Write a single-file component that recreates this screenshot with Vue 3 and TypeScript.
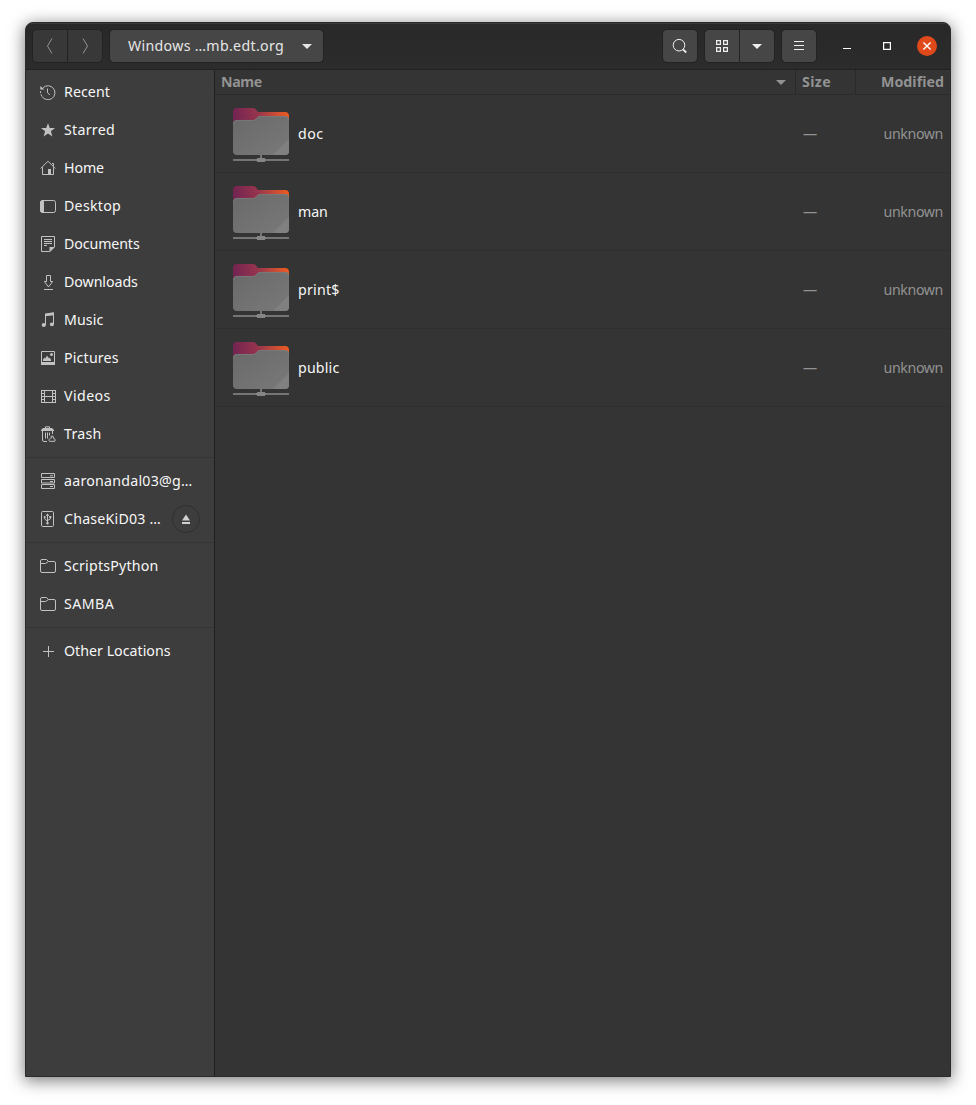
<script setup lang="ts">
import type { Directive } from 'vue'

interface Glyph { line?: string; fill?: string }
interface Place { label: string; icon: string; width: number; eject?: boolean }
interface Folder { name: string; width: number }

const glyphs: Record<string, Glyph> = {
  recent: {
    line: 'M3.2 3.6A7 7 0 1 1 1.9 12.3M.6 7.2V9.2M1 10.4L1.7 12M7.5 4.5V8.6L9.8 11',
    fill: 'M.3 2V5.5H4.5Z',
  },
  starred: { fill: 'M8 1.3L9.8 6.1H15L10.9 9.3L12.4 14.4L8 11.4L3.6 14.4L5.1 9.3L1 6.1H6.2Z' },
  home: {
    line: 'M.7 8.5L8 1.2L15.3 8.5M2.5 7.2V14.5H8M10.5 14.5H13.5V7.2M12 3.5H13.5V6',
    fill: 'M8 9H11V15H8Z',
  },
  desktop: {
    line: 'M2.5 2.5H13.5A2 2 0 0 1 15.5 4.5V12.5A2 2 0 0 1 13.5 14.5H2.5A2 2 0 0 1 .5 12.5V4.5A2 2 0 0 1 2.5 2.5Z',
    fill: 'M2 2H4V15H2L0 13V4Z',
  },
  documents: {
    line: 'M1.5 .5H14.5V11L9.8 15.5H1.5ZM4 3.5H12M4 5.5H12M4 7.5H12M4 9.5H7',
    fill: 'M9.5 11H14.8L9.5 16Z',
  },
  downloads: { line: 'M6.5 1.5H10.5V7.5H12.6L8.5 13L4.4 7.5H6.5ZM4 15.5H13' },
  music: {
    line: 'M5.5 13V2.5L13.5 1.3V12',
    fill: 'M5 1.5L14 .2V3.2L5 4.3ZM5.9 13a2.1 1.9 0 1 1-4.2 0a2.1 1.9 0 1 1 4.2 0ZM14 12.3a2.1 1.9 0 1 1-4.2 0a2.1 1.9 0 1 1 4.2 0Z',
  },
  pictures: {
    line: 'M1.5 1.5H14.5V14.5H1.5Z',
    fill: 'M1 12H15V15H1ZM3 11V9.2L4.5 7.8L5.2 8.5L7 5.5L8.5 8L9.3 7.5L11 9.5V11ZM13 4.6a1.5 1.5 0 1 1-3 0a1.5 1.5 0 1 1 3 0Z',
  },
  videos: {
    line: 'M1.5 2V15M15.5 2V15M4.5 2V15M12.5 2V15M4 2.5H13M4 8.5H13M4 14.5H13M1 2.5H4M1 5.5H4M1 8.5H4M1 11.5H4M1 14.5H4M13 2.5H16M13 5.5H16M13 8.5H16M13 11.5H16M13 14.5H16',
  },
  trash: {
    line: 'M5.5 2.5V.8H9.5V2.5M2.5 5V14A1.5 1.5 0 0 0 4 15.5H7M12.5 5V8M5.5 6.5V12.5M7.5 6.5V12.5M9.5 6.5V9.5M9.5 15.3H14.8C16 13.5 14.4 12.4 13.2 12.2V10.2H11.2V12.2C9.8 12.4 8 13.6 9.5 15.3Z',
    fill: 'M3 2H12L14 4V5H1V4Z',
  },
  server: { line: 'M1.5 .5H14.5V4.5H1.5ZM1.5 6.5H14.5V10H1.5ZM1.5 11.5H14.5V15.5H1.5ZM10 2.8H13M10 8.5H13M10 13.5H13' },
  usb: {
    line: 'M2.7 .5H12.3A1.2 1.2 0 0 1 13.5 1.7V14.3A1.2 1.2 0 0 1 12.3 15.5H2.7A1.2 1.2 0 0 1 1.5 14.3V1.7A1.2 1.2 0 0 1 2.7 .5ZM7.5 4V12M4.7 6V8L7.5 10.2M10.3 6V8L7.5 9.5',
    fill: 'M7.5 2.3L9.2 5H5.8ZM9.3 5H11.3V7H9.3ZM5.7 6.1a1 1 0 1 1-2 0a1 1 0 1 1 2 0ZM8.8 12.2a1.3 1.3 0 1 1-2.6 0a1.3 1.3 0 1 1 2.6 0Z',
  },
  folder: { line: 'M2 1.5H6.5L8.5 3.5H14A1.5 1.5 0 0 1 15.5 5V13A1.5 1.5 0 0 1 14 14.5H2A1.5 1.5 0 0 1 .5 13V3A1.5 1.5 0 0 1 2 1.5ZM.5 5.5H5.5L8.5 3.5' },
  plus: { line: 'M8.5 3V14M3 8.5H14' },
}

const groups: Place[][] = [
  [
    { label: 'Recent', icon: 'recent', width: 46 },
    { label: 'Starred', icon: 'starred', width: 51 },
    { label: 'Home', icon: 'home', width: 40 },
    { label: 'Desktop', icon: 'desktop', width: 57 },
    { label: 'Documents', icon: 'documents', width: 75.6 },
    { label: 'Downloads', icon: 'downloads', width: 73.8 },
    { label: 'Music', icon: 'music', width: 39.4 },
    { label: 'Pictures', icon: 'pictures', width: 54.8 },
    { label: 'Videos', icon: 'videos', width: 46.8 },
    { label: 'Trash', icon: 'trash', width: 37.5 },
  ],
  [
    { label: 'aaronandal03@g…', icon: 'server', width: 128.5 },
    { label: 'ChaseKiD03 …', icon: 'usb', width: 97, eject: true },
  ],
  [
    { label: 'ScriptsPython', icon: 'folder', width: 94.6 },
    { label: 'SAMBA', icon: 'folder', width: 50.2 },
  ],
  [{ label: 'Other Locations', icon: 'plus', width: 106.6 }],
]

const folders: Folder[] = [
  { name: 'doc', width: 25.6 },
  { name: 'man', width: 29.6 },
  { name: 'print$', width: 41.6 },
  { name: 'public', width: 41.4 },
]

// Tracks the label so that it occupies the given advance width.
const vFit: Directive<HTMLElement, number> = {
  mounted(el, { value }) {
    const count = Array.from(el.textContent ?? '').length
    const spacing = (value - el.getBoundingClientRect().width) / count
    el.style.letterSpacing = `${spacing.toFixed(3)}px`
  },
}
</script>

<template>
  <div class="desk">
    <main class="window">
      <header class="titlebar">
        <div class="group nav">
          <button class="btn" aria-label="Back"><svg width="16" height="16"><path d="M10 .5L5.5 8L10 15.5" /></svg></button>
          <button class="btn" aria-label="Forward"><svg width="16" height="16"><path d="M6 .5L10.5 8L6 15.5" /></svg></button>
        </div>
        <div class="group path">
          <button class="btn pathbtn">
            <span v-fit="156">Windows …mb.edt.org</span>
            <svg class="solid" width="10" height="5"><path d="M0 0H10L5 5Z" /></svg>
          </button>
        </div>
        <div class="spacer"></div>
        <div class="group">
          <button class="btn" aria-label="Search"><svg width="16" height="16"><circle cx="7" cy="7.2" r="5.8" /><path d="M11 11.3L14.2 14.5" stroke-width="1.8" /></svg></button>
        </div>
        <div class="group">
          <button class="btn" aria-label="Grid view"><svg width="16" height="16"><path d="M2.6 2.6H6.4V6.4H2.6ZM9.6 2.6H13.4V6.4H9.6ZM2.6 9.6H6.4V13.4H2.6ZM9.6 9.6H13.4V13.4H9.6Z" stroke-width="1.2" /></svg></button>
          <button class="btn" aria-label="View options"><svg class="solid" width="10" height="5"><path d="M0 0H10L5 5Z" /></svg></button>
        </div>
        <div class="group">
          <button class="btn" aria-label="Menu"><svg width="16" height="16"><path d="M3 3.5H13M3 7.5H13M3 11.5H13" /></svg></button>
        </div>
        <div class="controls">
          <svg width="20" height="20"><path d="M6 12.5H14" /></svg>
          <svg width="20" height="20"><path d="M6.6 6.6H13.4V13.4H6.6Z" stroke-width="1.2" /></svg>
          <svg class="close" width="20" height="20"><circle cx="10" cy="10" r="10" /><path d="M6.4 6.4L13.6 13.6M13.6 6.4L6.4 13.6" stroke-width="1.4" /></svg>
        </div>
      </header>

      <div class="body">
        <nav class="sidebar">
          <div v-for="(group, g) in groups" :key="g" class="section">
            <div v-for="place in group" :key="place.label" class="place">
              <svg class="glyph" width="16" height="16">
                <path v-if="glyphs[place.icon].fill" class="fill" :d="glyphs[place.icon].fill" />
                <path v-if="glyphs[place.icon].line" class="line" :d="glyphs[place.icon].line" />
              </svg>
              <span v-fit="place.width">{{ place.label }}</span>
              <span v-if="place.eject" class="eject">
                <svg width="8" height="10"><path d="M4 .5L8 6.5H0ZM0 8H8V10H0Z" /></svg>
              </span>
            </div>
          </div>
        </nav>

        <section class="list">
          <div class="row head">
            <div class="cell name"><span v-fit="41">Name</span><svg width="10" height="5"><path d="M0 0H10L5 5Z" /></svg></div>
            <div class="cell size"><span v-fit="29">Size</span></div>
            <div class="cell modified"><span v-fit="63">Modified</span></div>
          </div>
          <div v-for="folder in folders" :key="folder.name" class="row item">
            <div class="cell name">
              <svg class="foldericon" width="56" height="55" viewBox="0 0 56 55">
                <defs>
                  <linearGradient id="back" x1="0" x2="56" y1="14" y2="4" gradientUnits="userSpaceOnUse">
                    <stop offset="0" stop-color="#702352" />
                    <stop offset=".45" stop-color="#97344d" />
                    <stop offset=".8" stop-color="#d04f31" />
                    <stop offset="1" stop-color="#f05b20" />
                  </linearGradient>
                  <linearGradient id="front" x1="0" x2="1" y1="0" y2="1">
                    <stop offset="0" stop-color="#696969" />
                    <stop offset="1" stop-color="#797979" />
                  </linearGradient>
                </defs>
                <path fill="url(#back)" d="M0 4Q0 0 4 0H20Q21.5 0 22.5 1L25 4H52Q56 4 56 8V20H0Z" />
                <path fill="url(#front)" d="M0 16Q0 12 4 12H20.5Q21.5 12 22.5 11L25 8.8Q26 8 27 8H52Q56 8 56 12V43Q56 47 52 47H4Q0 47 0 43Z" />
                <path fill="#808080" d="M56 31V43Q56 47 52 47H40Z" />
                <path fill="none" stroke="#858585" stroke-opacity=".65" stroke-width=".8" d="M.4 16Q.4 12.4 4 12.4H20.5Q22 12.4 23 11.2L25.3 9Q26 8.4 27 8.4H52Q55.6 8.4 55.6 12" />
                <path fill="#757575" d="M27 47H29V50H27ZM0 51H56V53H0Z" />
                <path fill="#858585" d="M24 50H32V51H33V53H32V54H24V53H23V51H24Z" />
              </svg>
              <span v-fit="folder.width">{{ folder.name }}</span>
            </div>
            <div class="cell size"><span v-fit="16">—</span></div>
            <div class="cell modified"><span v-fit="59.4">unknown</span></div>
          </div>
        </section>
      </div>
    </main>
  </div>
</template>

<style>
html, body { background: #fff; overflow: hidden; }
</style>

<style scoped>
* { box-sizing: border-box; }
.desk {
  width: 976px;
  height: 1105px;
  padding: 22px 25px 28px;
  font: 14.2px/20px "Noto Sans", "Open Sans", sans-serif;
  color: #f7f7f7;
}
.window {
  display: flex;
  flex-direction: column;
  height: 1055px;
  border: 1px solid #2b2b2b;
  border-radius: 8px 8px 0 0;
  background: #343434;
  box-shadow: 0 3px 16px 1px rgba(0, 0, 0, .5);
  overflow: hidden;
}
.titlebar {
  display: flex;
  flex: none;
  align-items: center;
  gap: 6px;
  height: 47px;
  padding: 0 13px 1px 6px;
  background: linear-gradient(#282828, #2c2c2c);
  border-top: 1px solid #393939;
  border-bottom: 1px solid #212121;
}
.group {
  display: flex;
  height: 34px;
  border: 1px solid #222;
  border-radius: 5px;
  background: #464646;
  overflow: hidden;
}
.btn {
  display: flex;
  align-items: center;
  justify-content: center;
  width: 34px;
  padding: 0;
  border: 0;
  background: none;
  color: #eee;
  font: inherit;
}
.btn + .btn { width: 35px; border-left: 1px solid #222; }
svg { display: block; flex: none; fill: none; stroke: currentColor; }
.solid { fill: currentColor; stroke: none; }
.nav { background: #383838; }
.nav .btn { color: #939393; }
.path { width: 215px; }
.pathbtn { width: 100%; justify-content: space-between; padding: 0 11px 0 18px; color: #e5e5e5; white-space: nowrap; }
.spacer { flex: 1; }
.controls { display: flex; gap: 20px; margin-left: 14px; color: #fff; }
.close circle { fill: #e04a1a; stroke: none; }
.body { display: flex; flex: 1; min-height: 0; }
.sidebar { width: 189px; padding-top: 3px; background: #3d3d3d; border-right: 1px solid #202020; }
.section { padding-bottom: 4px; }
.section + .section { padding-top: 4px; border-top: 1px solid #353535; }
.place { display: flex; align-items: center; height: 38px; padding-left: 14px; white-space: nowrap; }
.glyph { margin-right: 8px; }
.fill { fill: #c2c2c2; stroke: none; }
.line { stroke: #c2c2c2; }
.eject {
  display: flex;
  align-items: center;
  justify-content: center;
  width: 28px;
  height: 28px;
  margin-left: 11px;
  border: 1px solid #303030;
  border-radius: 50%;
}
.eject svg { fill: #d0d0d0; stroke: none; }
.list { flex: 1; }
.row { display: flex; border-bottom: 1px solid #2f2f2f; }
.cell { display: flex; align-items: center; color: #929292; }
.name { flex: 1; }
.size { width: 60px; padding-left: 8px; }
.modified { width: 95px; justify-content: flex-end; padding-right: 7px; }
.head { height: 25px; font-weight: 700; border-bottom-color: #2b2b2b; }
.head .name { justify-content: space-between; padding: 0 9px 0 6px; }
.head .name svg { fill: #929292; stroke: none; }
.head .size, .head .modified { border-left: 1px solid #292929; }
.head .size { padding-left: 6px; }
.head .modified { padding-right: 6px; }
.item { height: 78px; }
.item .name { padding-left: 18px; color: #f7f7f7; }
.foldericon { margin: 4px 9px 0 0; stroke: none; }
</style>
